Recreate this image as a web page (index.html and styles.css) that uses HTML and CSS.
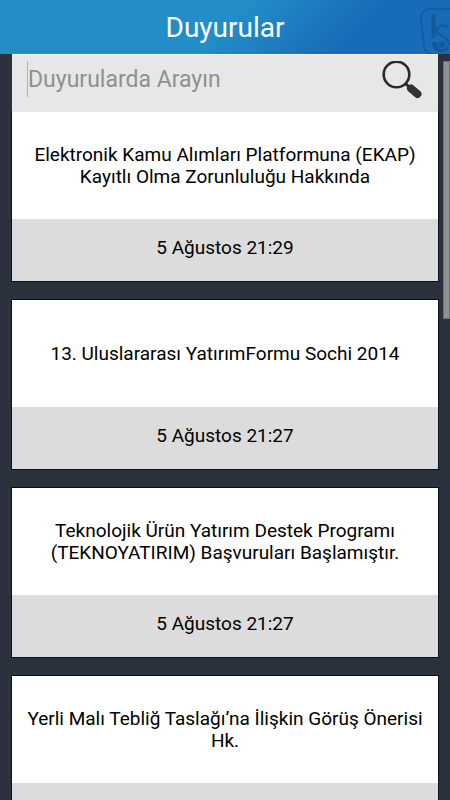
FILE: index.html
```html
<!DOCTYPE html>
<html lang="tr">
<head>
  <meta charset="UTF-8">
  <meta name="viewport" content="width=device-width, initial-scale=1.0">
  <title>Duyurular</title>
  <link rel="stylesheet" href="styles.css">
</head>
<body>
  <header class="header">
    <h1>Duyurular</h1>
    <svg class="header-logo" viewBox="0 0 30 46" fill="none" stroke="#125a9c" aria-hidden="true">
      <path d="M30 1H11Q1 1 1 11L4 38Q5 46 13 46" stroke-width="1.500"/>
      <path d="M13.500 6V30" stroke-width="4"/>
      <path d="M27 20C25 16 17 17 17 23C18 29 28 27 29 37" stroke-width="2"/>
      <path d="M12 34H17Q17 39 21 41Q25 42 28 38L29 41Q25 45 20 44Q12 42 12 34Z" fill="#125a9c" stroke="none"/>
      <circle cx="22" cy="36.500" r="3.200" fill="#125a9c" stroke="none"/>
    </svg>
  </header>

  <main class="content">
    <form class="search">
      <input type="text" class="search-input" placeholder="Duyurularda Arayın" aria-label="Duyurularda Arayın">
      <button type="submit" class="search-btn" aria-label="Ara">
        <svg viewBox="0 0 40 40" aria-hidden="true">
          <circle cx="14.500" cy="13.500" r="12.800" fill="none" stroke="#2b2b2b" stroke-width="2.600"/>
          <path d="M23 22L28 27" stroke="#2b2b2b" stroke-width="3"/>
          <path d="M29 27.500L35.500 33" stroke="#333" stroke-width="8" stroke-linecap="round"/>
        </svg>
      </button>
    </form>

    <article class="card">
      <h2 class="card-title">Elektronik Kamu Alımları Platformuna (EKAP) Kayıtlı Olma Zorunluluğu Hakkında</h2>
      <p class="card-date">5 Ağustos 21:29</p>
    </article>

    <article class="card">
      <h2 class="card-title">13. Uluslararası YatırımFormu Sochi 2014</h2>
      <p class="card-date">5 Ağustos 21:27</p>
    </article>

    <article class="card">
      <h2 class="card-title">Teknolojik Ürün Yatırım Destek Programı (TEKNOYATIRIM) Başvuruları Başlamıştır.</h2>
      <p class="card-date">5 Ağustos 21:27</p>
    </article>

    <article class="card">
      <h2 class="card-title">Yerli Malı Tebliğ Taslağı’na İlişkin Görüş Önerisi Hk.</h2>
      <p class="card-date"></p>
    </article>

    <div class="scroll-thumb"></div>
  </main>
</body>
</html>
```

FILE: styles.css
```css
* {
  box-sizing: border-box;
}

body {
  margin: 0;
  height: 100vh;
  display: flex;
  flex-direction: column;
  overflow: hidden;
  background-color: #2b313d;
  color: #000;
  font-family: Roboto, sans-serif;
}

h1,
h2,
p {
  margin: 0;
  font-weight: 400;
}

.header {
  position: relative;
  flex: none;
  height: 54px;
  display: flex;
  align-items: center;
  justify-content: center;
  overflow: hidden;
  background: linear-gradient(135deg, #228dc7 50%, #186bb8 77%);
}

.header h1 {
  margin-top: 2px;
  color: #fff;
  font-size: 28px;
  line-height: 32px;
}

.header-logo {
  position: absolute;
  top: 8px;
  right: 0;
  width: 30px;
  height: 46px;
}

.content {
  position: relative;
  flex: 1;
  min-height: 0;
  padding: 0 12px;
  overflow: hidden;
}

.search {
  position: relative;
  z-index: 1;
  display: flex;
  align-items: flex-start;
  height: 58px;
  padding: 6px 15px 0;
  background-color: #e7e7e7;
  border-top: 1px solid #f2f2f2;
}

.search-input {
  flex: 1;
  min-width: 0;
  height: 36px;
  padding: 0;
  border: none;
  border-left: 1px solid #b4b4b4;
  outline: none;
  background: none;
  color: #000;
  font-family: inherit;
  font-size: 23px;
}

.search-input::placeholder {
  color: #909090;
  opacity: 1;
}

.search-btn {
  width: 41px;
  height: 40px;
  padding: 0;
  border: none;
  background: none;
  cursor: pointer;
}

.search-btn svg {
  display: block;
  width: 40px;
  height: 40px;
}

.card {
  margin-bottom: 19px;
  background-color: #fff;
  box-shadow: 0 0 0 1px #0b1019;
}

.card-title {
  display: flex;
  align-items: center;
  justify-content: center;
  min-height: 107px;
  padding: 0 12px;
  font-size: 19px;
  line-height: 22px;
  text-align: center;
}

.card-date {
  height: 62px;
  padding: 18px 12px;
  background-color: #dcdcdc;
  font-size: 19px;
  line-height: 22px;
  text-align: center;
}

.scroll-thumb {
  position: absolute;
  top: 7px;
  right: 0;
  width: 7px;
  height: 258px;
  background-color: #919191;
  border: 1px solid #6d7076;
}
```
